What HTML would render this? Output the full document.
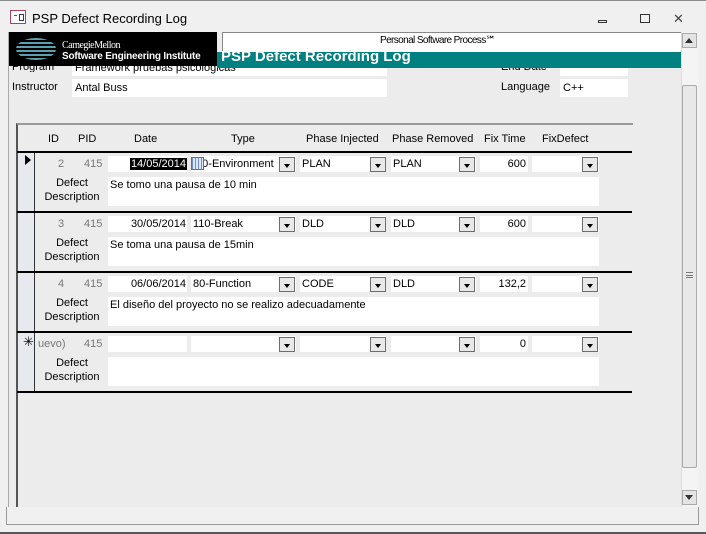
<!DOCTYPE html><html><head><style>
*{margin:0;padding:0;box-sizing:border-box}
body{width:706px;height:534px;background:#f0f0f0;font-family:"Liberation Sans",sans-serif;font-size:11px;color:#000;position:relative;overflow:hidden}
div{position:absolute}
.w{background:#fff}
.b{border:1px solid #6d6d6d;background:#e8e8e8;width:16px;height:15px}
.b:after{content:"";position:absolute;left:4px;top:6px;border-left:3.5px solid transparent;border-right:3.5px solid transparent;border-top:4px solid #000}
.g{color:#777}
.t{line-height:16px;white-space:nowrap}
.hl{height:2px;background:#000;left:17px;width:615px}
</style></head><body>
<div style="left:0;top:0;width:706px;height:1px;background:#8a8a8a"></div>
<div style="left:10px;top:10px;width:16px;height:14px;border:1px solid #b04060;background:#fff"></div>
<div style="left:14px;top:15px;width:3px;height:1px;background:#555"></div>
<div style="left:19px;top:14px;width:5px;height:7px;border:1px solid #336"></div>
<div style="left:32px;top:11px;font-size:13px;line-height:16px">PSP Defect Recording Log</div>
<div style="left:598px;top:20px;width:9px;height:3px;border:1px solid #333"></div>
<div style="left:640px;top:14px;width:10px;height:9px;border:1px solid #333"></div>
<div style="left:673px;top:11px;font-size:13px;color:#444">✕</div>
<!-- main form area -->
<div style="left:8px;top:32px;width:690px;height:476px;background:#ececec;border-left:1px solid #aaa"></div>
<div style="left:12px;top:58px;overflow:hidden;height:14px;width:60px"><div style="top:3px;left:0">Program</div></div>
<div class="w" style="left:72px;top:64px;width:315px;height:12px;overflow:hidden"><div style="left:3px;top:-2px">Framework pruebas psicologicas</div></div>
<div style="left:501px;top:58px;overflow:hidden;height:14px;width:55px"><div style="top:3px;left:0">End Date</div></div>
<div class="w" style="left:560px;top:64px;width:68px;height:12px"></div>
<div style="left:9px;top:32px;width:208px;height:34px;background:#000"></div>
<div style="left:16px;top:38px;width:40px;height:22px;background:repeating-linear-gradient(#5aa0b0 0 2px,#000 2px 4px);border-radius:50%"></div>
<div style="left:62px;top:40px;color:#fff;font-family:'Liberation Serif',serif;font-size:10px;letter-spacing:-.5px">CarnegieMellon</div>
<div style="left:62px;top:51px;color:#fff;font-size:10px;font-weight:bold;letter-spacing:-.2px">Software Engineering Institute</div>
<div style="left:222px;top:32px;width:460px;height:21px;background:#fff;border:1px solid #888"></div>
<div style="left:380px;top:35px;font-size:10px;letter-spacing:-.6px">Personal Software Process℠</div>
<div style="left:217px;top:52px;width:465px;height:16px;background:#008080"></div>
<div style="left:221px;top:48px;color:#fff;font-size:15px;font-weight:bold;line-height:18px">PSP Defect Recording Log</div>
<div style="left:12px;top:81px">Instructor</div>
<div class="w t" style="left:72px;top:79px;width:315px;height:18px;padding:1px 3px">Antal Buss</div>
<div style="left:501px;top:81px">Language</div>
<div class="w t" style="left:560px;top:79px;width:68px;height:18px;padding:1px 3px">C++</div>
<!-- subform -->
<div style="left:16px;top:123px;width:617px;height:385px;border-left:2px solid #555;border-top:2px solid #999;background:#ececec"></div>
<div style="left:18px;top:152px;width:17px;height:240px;background:#e6e9ee;border-right:1px solid #333"></div>
<div style="left:48px;top:133px">ID</div><div style="left:78px;top:133px">PID</div>
<div style="left:134px;top:133px">Date</div><div style="left:231px;top:133px">Type</div>
<div style="left:306px;top:133px">Phase Injected</div><div style="left:392px;top:133px">Phase Removed</div>
<div style="left:484px;top:133px">Fix Time</div><div style="left:542px;top:133px">FixDefect</div>
<div class="hl" style="top:151px"></div><div class="hl" style="top:211px"></div><div class="hl" style="top:271px"></div><div class="hl" style="top:331px"></div><div class="hl" style="top:391px"></div>
<div style="left:25px;top:155px;border-top:5px solid transparent;border-bottom:5px solid transparent;border-left:6px solid #000"></div>
<div style="left:23px;top:334px;font-size:13px">✳</div>

<!-- row1 -->
<div class="g t" style="left:58px;top:156px">2</div><div class="g t" style="left:84px;top:156px">415</div>
<div class="w t" style="left:108px;top:156px;width:79px;height:16px;text-align:right"><span style="background:#000;color:#fff;padding:0 1px">14/05/2014</span></div>
<div class="w t" style="left:191px;top:156px;width:105px;height:16px;padding-left:2px">&nbsp;&nbsp;&nbsp;0-Environment</div>
<div style="left:191px;top:157px;width:13px;height:13px;background:repeating-linear-gradient(90deg,#7090d0 0 1px,#dde6f5 1px 3px);border:1px solid #5070b0"></div>
<div class="w t" style="left:300px;top:156px;width:86px;height:16px;padding-left:2px">PLAN</div>
<div class="w t" style="left:391px;top:156px;width:85px;height:16px;padding-left:2px">PLAN</div>
<div class="w t" style="left:480px;top:156px;width:48px;height:16px;text-align:right;padding-right:2px">600</div>
<div class="w" style="left:532px;top:156px;width:67px;height:16px"></div>
<div class="t" style="left:44px;top:176px;width:56px;text-align:center;line-height:14px;white-space:normal">Defect Description</div>
<div class="w t" style="left:108px;top:177px;width:491px;height:29px;padding:0 2px">Se tomo una pausa de 10 min</div>
<!-- row2 -->
<div class="g t" style="left:58px;top:216px">3</div><div class="g t" style="left:84px;top:216px">415</div>
<div class="w t" style="left:108px;top:216px;width:79px;height:16px;text-align:right;padding-right:1px">30/05/2014</div>
<div class="w t" style="left:191px;top:216px;width:105px;height:16px;padding-left:2px">110-Break</div>
<div class="w t" style="left:300px;top:216px;width:86px;height:16px;padding-left:2px">DLD</div>
<div class="w t" style="left:391px;top:216px;width:85px;height:16px;padding-left:2px">DLD</div>
<div class="w t" style="left:480px;top:216px;width:48px;height:16px;text-align:right;padding-right:2px">600</div>
<div class="w" style="left:532px;top:216px;width:67px;height:16px"></div>
<div class="t" style="left:44px;top:236px;width:56px;text-align:center;line-height:14px;white-space:normal">Defect Description</div>
<div class="w t" style="left:108px;top:237px;width:491px;height:29px;padding:0 2px">Se toma una pausa de 15min</div>
<!-- row3 -->
<div class="g t" style="left:58px;top:276px">4</div><div class="g t" style="left:84px;top:276px">415</div>
<div class="w t" style="left:108px;top:276px;width:79px;height:16px;text-align:right;padding-right:1px">06/06/2014</div>
<div class="w t" style="left:191px;top:276px;width:105px;height:16px;padding-left:2px">80-Function</div>
<div class="w t" style="left:300px;top:276px;width:86px;height:16px;padding-left:2px">CODE</div>
<div class="w t" style="left:391px;top:276px;width:85px;height:16px;padding-left:2px">DLD</div>
<div class="w t" style="left:480px;top:276px;width:48px;height:16px;text-align:right;padding-right:2px">132,2</div>
<div class="w" style="left:532px;top:276px;width:67px;height:16px"></div>
<div class="t" style="left:44px;top:296px;width:56px;text-align:center;line-height:14px;white-space:normal">Defect Description</div>
<div class="w t" style="left:108px;top:297px;width:491px;height:29px;padding:0 2px">El diseño del proyecto no se realizo adecuadamente</div>
<!-- new row -->
<div class="g t" style="left:38px;top:336px">uevo)</div><div class="g t" style="left:84px;top:336px">415</div>
<div class="w" style="left:108px;top:336px;width:79px;height:16px"></div>
<div class="w" style="left:191px;top:336px;width:105px;height:16px"></div>
<div class="w" style="left:300px;top:336px;width:86px;height:16px"></div>
<div class="w" style="left:391px;top:336px;width:85px;height:16px"></div>
<div class="w t" style="left:480px;top:336px;width:48px;height:16px;text-align:right;padding-right:2px">0</div>
<div class="w" style="left:532px;top:336px;width:67px;height:16px"></div>
<div class="t" style="left:44px;top:356px;width:56px;text-align:center;line-height:14px;white-space:normal">Defect Description</div>
<div class="w" style="left:108px;top:357px;width:491px;height:29px"></div>
<!-- dropdown buttons -->
<div class="b" style="left:279px;top:157px"></div><div class="b" style="left:370px;top:157px"></div><div class="b" style="left:459px;top:157px"></div><div class="b" style="left:582px;top:157px"></div>
<div class="b" style="left:279px;top:217px"></div><div class="b" style="left:370px;top:217px"></div><div class="b" style="left:459px;top:217px"></div><div class="b" style="left:582px;top:217px"></div>
<div class="b" style="left:279px;top:277px"></div><div class="b" style="left:370px;top:277px"></div><div class="b" style="left:459px;top:277px"></div><div class="b" style="left:582px;top:277px"></div>
<div class="b" style="left:279px;top:337px"></div><div class="b" style="left:370px;top:337px"></div><div class="b" style="left:459px;top:337px"></div><div class="b" style="left:582px;top:337px"></div>
<!-- scrollbar -->
<div style="left:681px;top:32px;width:17px;height:476px;background:#f4f4f4;border-left:1px solid #ddd"></div>
<div style="left:682px;top:33px;width:15px;height:15px;background:#e4e4e4;border:1px solid #aaa"></div>
<div style="left:685px;top:38px;border-left:4.5px solid transparent;border-right:4.5px solid transparent;border-bottom:5px solid #333"></div>
<div style="left:682px;top:85px;width:15px;height:383px;background:#e8e8e8;border:1px solid #aaa;border-radius:2px"></div>
<div style="left:686px;top:272px;width:7px;height:6px;border-top:1px solid #777;border-bottom:1px solid #777"></div>
<div style="left:686px;top:275px;width:7px;height:1px;background:#777"></div>
<div style="left:682px;top:490px;width:15px;height:15px;background:#e4e4e4;border:1px solid #aaa"></div>
<div style="left:685px;top:495px;border-left:4.5px solid transparent;border-right:4.5px solid transparent;border-top:5px solid #333"></div>
<!-- bottom -->
<div style="left:6px;top:507px;width:693px;height:18px;border:1px solid #999;border-top:none;background:#f0f0f0"></div>
<div style="left:0;top:532px;width:706px;height:2px;background:#555"></div>
</body></html>
